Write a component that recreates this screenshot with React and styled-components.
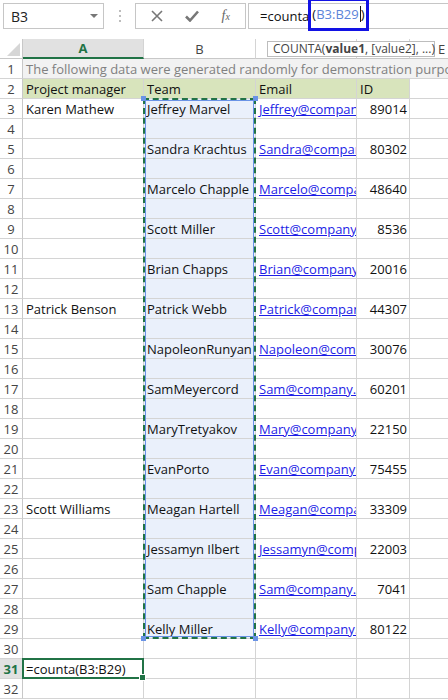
import React from 'react'
import styled, { createGlobalStyle } from 'styled-components'

const GlobalStyle = createGlobalStyle`
  body {
    margin: 0;
    background: #fff;
    font-family: 'Open Sans', 'Liberation Sans', sans-serif;
  }
`

const GREEN = '#217346'
const GRID = '#d4d4d4'

const people = [
  ['Karen Mathew', 'Jeffrey Marvel', 'Jeffrey@company.com', 89014],
  ['', 'Sandra Krachtus', 'Sandra@company.com', 80302],
  ['', 'Marcelo Chapple', 'Marcelo@company.com', 48640],
  ['', 'Scott Miller', 'Scott@company.com', 8536],
  ['', 'Brian Chapps', 'Brian@company.com', 20016],
  ['Patrick Benson', 'Patrick Webb', 'Patrick@company.com', 44307],
  ['', 'NapoleonRunyan', 'Napoleon@company.com', 30076],
  ['', 'SamMeyercord', 'Sam@company.com', 60201],
  ['', 'MaryTretyakov', 'Mary@company.com', 22150],
  ['', 'EvanPorto', 'Evan@company.com', 75455],
  ['Scott Williams', 'Meagan Hartell', 'Meagan@company.com', 33309],
  ['', 'Jessamyn Ilbert', 'Jessamyn@company.com', 22003],
  ['', 'Sam Chapple', 'Sam@company.com', 7041],
  ['', 'Kelly Miller', 'Kelly@company.com', 80122],
]

const Window = styled.div`
  width: 448px;
  height: 700px;
  overflow: hidden;
  position: relative;
  background: #fff;
`

const FormulaBar = styled.div`
  display: flex;
  align-items: flex-start;
  height: 39px;
  padding: 3px 0 0 3px;
  box-sizing: border-box;
`

const NameBox = styled.div`
  width: 101px;
  height: 26px;
  box-sizing: border-box;
  border: 1px solid #c6c6c6;
  display: flex;
  align-items: center;
  justify-content: space-between;
  padding: 0 5px 0 7px;
  font-size: 14px;
  color: #222;
`

const Caret = styled.span`
  width: 0;
  height: 0;
  border-left: 4px solid transparent;
  border-right: 4px solid transparent;
  border-top: 4px solid #777;
`

const Grip = styled.div`
  width: 31px;
  height: 26px;
  display: flex;
  flex-direction: column;
  align-items: center;
  justify-content: center;
  gap: 3px;
`

const Dot = styled.span`
  width: 2px;
  height: 2px;
  background: #bdbdbd;
`

const ActionBox = styled.div`
  width: 111px;
  height: 26px;
  box-sizing: border-box;
  border: 1px solid #c6c6c6;
  display: flex;
  align-items: center;
  justify-content: space-around;
  padding: 0 4px;
  color: #777;
`

const Fx = styled.span`
  font-family: 'Liberation Serif', 'DejaVu Serif', serif;
  font-style: italic;
  font-size: 14px;
  color: #666;

  small {
    font-size: 10px;
  }
`

const FormulaInput = styled.div`
  flex: 1;
  height: 26px;
  margin-left: 2px;
  box-sizing: border-box;
  border: 1px solid #c6c6c6;
  border-right: none;
  display: flex;
  align-items: center;
  padding-left: 11px;
  font-size: 13px;
  color: #111;
  white-space: nowrap;
`

const RefBox = styled.span`
  display: inline-flex;
  align-items: center;
  height: 33px;
  margin-top: -4px;
  margin-left: -1px;
  box-sizing: border-box;
  border: 3px solid #1212e4;
  padding: 0 1px;
`

const RefText = styled.span`
  color: #5b84d9;
`

const Cursor = styled.span`
  display: inline-block;
  width: 1px;
  height: 16px;
  background: #111;
  margin: 0 0 0 1px;
`

const Tooltip = styled.div`
  position: absolute;
  left: 267px;
  top: 41px;
  width: 168px;
  height: 16px;
  box-sizing: border-box;
  border: 1px solid #bdbdbd;
  background: #fff;
  padding: 0 5px;
  font-size: 12px;
  line-height: 14px;
  color: #444;
  white-space: nowrap;
  z-index: 5;

  b {
    font-weight: 700;
  }
`

const Sheet = styled.div`
  display: grid;
  grid-template-columns: 23px 121px 112px 101px 53px 64px;
  grid-auto-rows: 20px;
  width: 474px;
  font-size: 13px;
`

const Corner = styled.div`
  grid-row: 1;
  grid-column: 1;
  border-right: 1px solid #c8c8c8;
  border-bottom: 1px solid #c8c8c8;
  box-sizing: border-box;
  position: relative;
  overflow: hidden;

  &::after {
    content: '';
    position: absolute;
    right: 2px;
    bottom: 2px;
    border-left: 13px solid transparent;
    border-bottom: 13px solid #d6d6d6;
  }
`

const ColHead = styled.div`
  grid-row: 1;
  grid-column: ${(p) => p.$c};
  box-sizing: border-box;
  border-right: 1px solid ${GRID};
  border-bottom: ${(p) => (p.$active ? `2px solid ${GREEN}` : '1px solid #c8c8c8')};
  background: ${(p) => (p.$active ? '#e1e1e1' : '#fff')};
  color: ${(p) => (p.$active ? GREEN : '#444')};
  font-weight: ${(p) => (p.$active ? 700 : 400)};
  display: flex;
  align-items: center;
  justify-content: center;
  font-size: 13px;
`

const RowHead = styled.div`
  grid-row: ${(p) => p.$r};
  grid-column: 1;
  box-sizing: border-box;
  border-right: 1px solid #c8c8c8;
  border-bottom: 1px solid ${GRID};
  background: ${(p) => (p.$active ? '#e1e1e1' : '#fff')};
  color: ${(p) => (p.$active ? GREEN : '#444')};
  font-weight: ${(p) => (p.$active ? 700 : 400)};
  display: flex;
  align-items: center;
  justify-content: center;
  font-size: 13px;
`

const Cell = styled.div`
  grid-row: ${(p) => p.$r};
  grid-column: ${(p) => p.$c};
  box-sizing: border-box;
  border-right: 1px solid ${(p) => (p.$noRight ? 'transparent' : GRID)};
  border-bottom: 1px solid ${GRID};
  background: ${(p) => p.$bg || '#fff'};
  color: ${(p) => p.$color || '#111'};
  text-align: ${(p) => p.$align || 'left'};
  padding: 0 2px 0 3px;
  line-height: 20px;
  white-space: nowrap;
  overflow: hidden;
`

const Link = styled.span`
  color: #1d1de6;
  text-decoration: underline;
`

const RangeMark = styled.div`
  grid-column: 3;
  grid-row: 4 / 31;
  margin: -1px 0 0 -1px;
  box-sizing: border-box;
  border: 2px dashed ${GREEN};
  outline: 1px solid #6a93e6;
  outline-offset: -3px;
  position: relative;
  pointer-events: none;
  z-index: 2;
`

const Handle = styled.span`
  position: absolute;
  width: 5px;
  height: 5px;
  background: #6a93e6;
  ${(p) => (p.$top ? 'top: -4px;' : 'bottom: -4px;')}
  ${(p) => (p.$left ? 'left: -4px;' : 'right: -4px;')}
`

const Selection = styled.div`
  grid-column: 2;
  grid-row: 32;
  margin: -1px 0 0 -1px;
  box-sizing: border-box;
  border: 2px solid ${GREEN};
  position: relative;
  pointer-events: none;
  z-index: 3;
`

const FillHandle = styled.span`
  position: absolute;
  right: -4px;
  bottom: -4px;
  width: 5px;
  height: 5px;
  background: ${GREEN};
  border: 1px solid #fff;
`

const cols = ['A', 'B', 'C', 'D', 'E']

function dataRow(n) {
  if (n >= 3 && n <= 29 && n % 2 === 1) return people[(n - 3) / 2]
  return null
}

function SheetRow({ n }) {
  const r = n + 1
  const inRange = n >= 3 && n <= 29
  const active = n === 31

  if (n === 1) {
    return (
      <>
        <RowHead $r={r}>{n}</RowHead>
        <Cell $r={r} $c="2 / -1" $bg="#f2f2f2" $color="#808080" $noRight>
          The following data were generated randomly for demonstration purposes.
        </Cell>
      </>
    )
  }

  if (n === 2) {
    return (
      <>
        <RowHead $r={r}>{n}</RowHead>
        <Cell $r={r} $c={2} $bg="#d8e4bc">Project manager</Cell>
        <Cell $r={r} $c={3} $bg="#d8e4bc">Team</Cell>
        <Cell $r={r} $c={4} $bg="#d8e4bc">Email</Cell>
        <Cell $r={r} $c={5} $bg="#d8e4bc">ID</Cell>
        <Cell $r={r} $c={6} />
      </>
    )
  }

  const d = dataRow(n)
  return (
    <>
      <RowHead $r={r} $active={active}>{n}</RowHead>
      <Cell $r={r} $c={2}>{active ? '=counta(B3:B29)' : d ? d[0] : ''}</Cell>
      <Cell $r={r} $c={3} $bg={inRange ? '#eaf0fb' : undefined}>{d ? d[1] : ''}</Cell>
      <Cell $r={r} $c={4}>{d ? <Link>{d[2]}</Link> : ''}</Cell>
      <Cell $r={r} $c={5} $align="right">{d ? d[3] : ''}</Cell>
      <Cell $r={r} $c={6} />
    </>
  )
}

export default function App() {
  const rows = Array.from({ length: 32 }, (_, i) => i + 1)
  return (
    <Window>
      <GlobalStyle />
      <FormulaBar>
        <NameBox>
          B3
          <Caret />
        </NameBox>
        <Grip>
          <Dot />
          <Dot />
          <Dot />
        </Grip>
        <ActionBox>
          <svg width="12" height="12" viewBox="0 0 12 12">
            <path d="M1 1 L11 11 M11 1 L1 11" stroke="#777" strokeWidth="1.6" fill="none" />
          </svg>
          <svg width="14" height="12" viewBox="0 0 14 12">
            <path d="M1 6.5 L5 10.5 L13 1.5" stroke="#777" strokeWidth="2.6" fill="none" />
          </svg>
          <Fx>
            f<small>x</small>
          </Fx>
        </ActionBox>
        <FormulaInput>
          =counta
          <RefBox>
            (<RefText>B3:B29</RefText>
            <Cursor />)
          </RefBox>
        </FormulaInput>
      </FormulaBar>

      <Tooltip>
        COUNTA(<b>value1</b>, [value2], ...)
      </Tooltip>

      <Sheet>
        <Corner />
        {cols.map((c, i) => (
          <ColHead key={c} $c={i + 2} $active={c === 'A'}>
            {c}
          </ColHead>
        ))}
        {rows.map((n) => (
          <SheetRow key={n} n={n} />
        ))}
        <RangeMark>
          <Handle $top $left />
          <Handle $top />
          <Handle $left />
          <Handle />
        </RangeMark>
        <Selection>
          <FillHandle />
        </Selection>
      </Sheet>
    </Window>
  )
}
